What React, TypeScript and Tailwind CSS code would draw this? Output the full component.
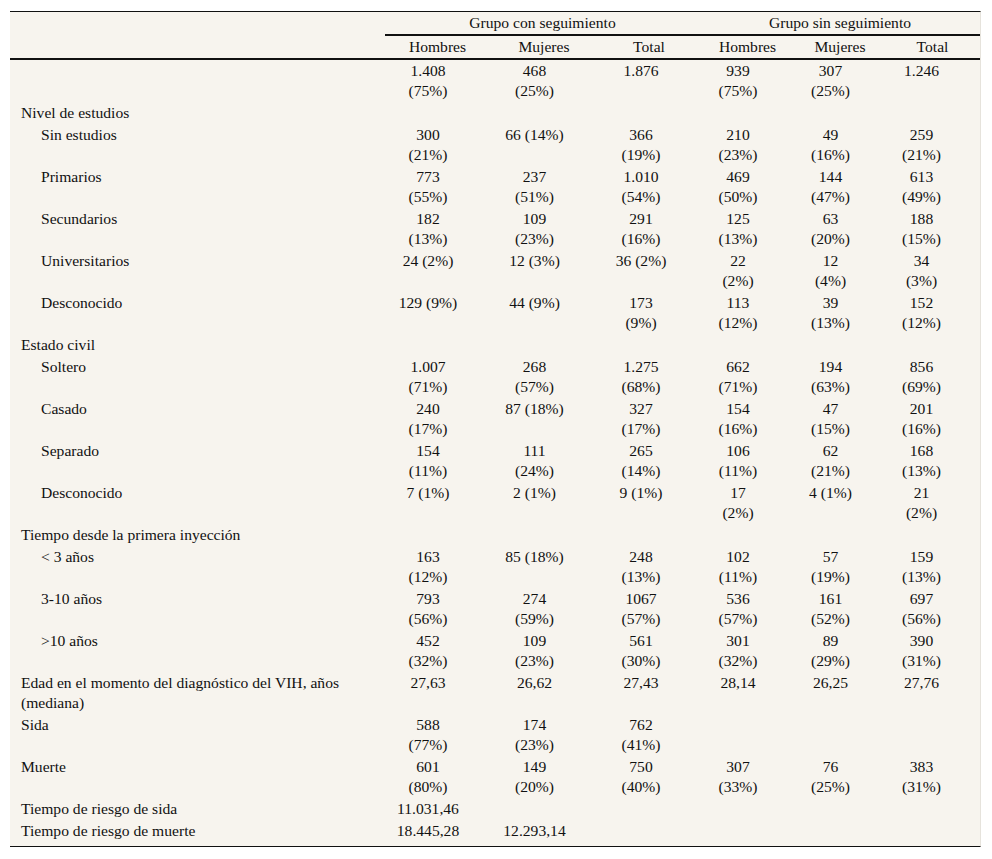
import React from "react";

type Row = { label: string; level: 0 | 1 | 2; cells?: string[] };

const rows: Row[] = [
  { label: "", level: 0, cells: ["1.408\n(75%)", "468\n(25%)", "1.876", "939\n(75%)", "307\n(25%)", "1.246"] },
  { label: "Nivel de estudios", level: 0 },
  { label: "Sin estudios", level: 1, cells: ["300\n(21%)", "66 (14%)", "366\n(19%)", "210\n(23%)", "49\n(16%)", "259\n(21%)"] },
  { label: "Primarios", level: 1, cells: ["773\n(55%)", "237\n(51%)", "1.010\n(54%)", "469\n(50%)", "144\n(47%)", "613\n(49%)"] },
  { label: "Secundarios", level: 1, cells: ["182\n(13%)", "109\n(23%)", "291\n(16%)", "125\n(13%)", "63\n(20%)", "188\n(15%)"] },
  { label: "Universitarios", level: 1, cells: ["24 (2%)", "12 (3%)", "36 (2%)", "22\n(2%)", "12\n(4%)", "34\n(3%)"] },
  { label: "Desconocido", level: 1, cells: ["129 (9%)", "44 (9%)", "173\n(9%)", "113\n(12%)", "39\n(13%)", "152\n(12%)"] },
  { label: "Estado civil", level: 0 },
  { label: "Soltero", level: 1, cells: ["1.007\n(71%)", "268\n(57%)", "1.275\n(68%)", "662\n(71%)", "194\n(63%)", "856\n(69%)"] },
  { label: "Casado", level: 1, cells: ["240\n(17%)", "87 (18%)", "327\n(17%)", "154\n(16%)", "47\n(15%)", "201\n(16%)"] },
  { label: "Separado", level: 1, cells: ["154\n(11%)", "111\n(24%)", "265\n(14%)", "106\n(11%)", "62\n(21%)", "168\n(13%)"] },
  { label: "Desconocido", level: 1, cells: ["7 (1%)", "2 (1%)", "9 (1%)", "17\n(2%)", "4 (1%)", "21\n(2%)"] },
  { label: "Tiempo desde la primera inyección", level: 0 },
  { label: "< 3 años", level: 1, cells: ["163\n(12%)", "85 (18%)", "248\n(13%)", "102\n(11%)", "57\n(19%)", "159\n(13%)"] },
  { label: "3-10 años", level: 1, cells: ["793\n(56%)", "274\n(59%)", "1067\n(57%)", "536\n(57%)", "161\n(52%)", "697\n(56%)"] },
  { label: ">10 años", level: 1, cells: ["452\n(32%)", "109\n(23%)", "561\n(30%)", "301\n(32%)", "89\n(29%)", "390\n(31%)"] },
  { label: "Edad en el momento del diagnóstico del VIH, años\n(mediana)", level: 0, cells: ["27,63", "26,62", "27,43", "28,14", "26,25", "27,76"] },
  { label: "Sida", level: 0, cells: ["588\n(77%)", "174\n(23%)", "762\n(41%)", "", "", ""] },
  { label: "Muerte", level: 0, cells: ["601\n(80%)", "149\n(20%)", "750\n(40%)", "307\n(33%)", "76\n(25%)", "383\n(31%)"] },
  { label: "Tiempo de riesgo de sida", level: 0, cells: ["11.031,46", "", "", "", "", ""] },
  { label: "Tiempo de riesgo de muerte", level: 0, cells: ["18.445,28", "12.293,14", "", "", "", ""] },
];

const sub = ["Hombres", "Mujeres", "Total", "Hombres", "Mujeres", "Total"];
const dataPad = ["pr-[19px]", "pr-[19px]", "pr-[16px]", "pr-[19px]", "pr-[19px]", "pr-[22px]"];

export default function App() {
  return (
    <div className="bg-white min-h-[859px] pt-[11px] font-['Liberation_Serif','Times_New_Roman',serif]">
      <div className="ml-[10px] w-[971px] bg-[#f7f4ee] border-t border-b border-r border-t-[#111] border-b-[#111] border-r-[#e6e3dc] text-[#111] text-[15.6px] leading-[20px] pb-[4px]">
        <div className="grid grid-cols-[375px_105px_108px_102px_95px_90px_95px]">
          <div className="py-[1px]" />
          <div className="col-span-3 text-center py-[1px] border-b-2 border-[#111]">Grupo con seguimiento</div>
          <div className="col-span-3 text-center py-[1px] border-b-2 border-[#111]">Grupo sin seguimiento</div>
          <div className="py-[1px] border-b-2 border-[#111]" />
          {sub.map((s, i) => (
            <div key={i} className="text-center py-[1px] border-b-2 border-[#111]">
              {s}
            </div>
          ))}
          {rows.map((r, ri) => (
            <React.Fragment key={ri}>
              <div className={"py-[1px] whitespace-pre-line " + (r.level === 1 ? "pl-[31px]" : "pl-[11px]")}>
                {r.label}
              </div>
              {(r.cells ?? ["", "", "", "", "", ""]).map((c, ci) => (
                <div key={ci} className={"py-[1px] text-center whitespace-pre-line " + dataPad[ci]}>
                  {c}
                </div>
              ))}
            </React.Fragment>
          ))}
        </div>
      </div>
    </div>
  );
}
